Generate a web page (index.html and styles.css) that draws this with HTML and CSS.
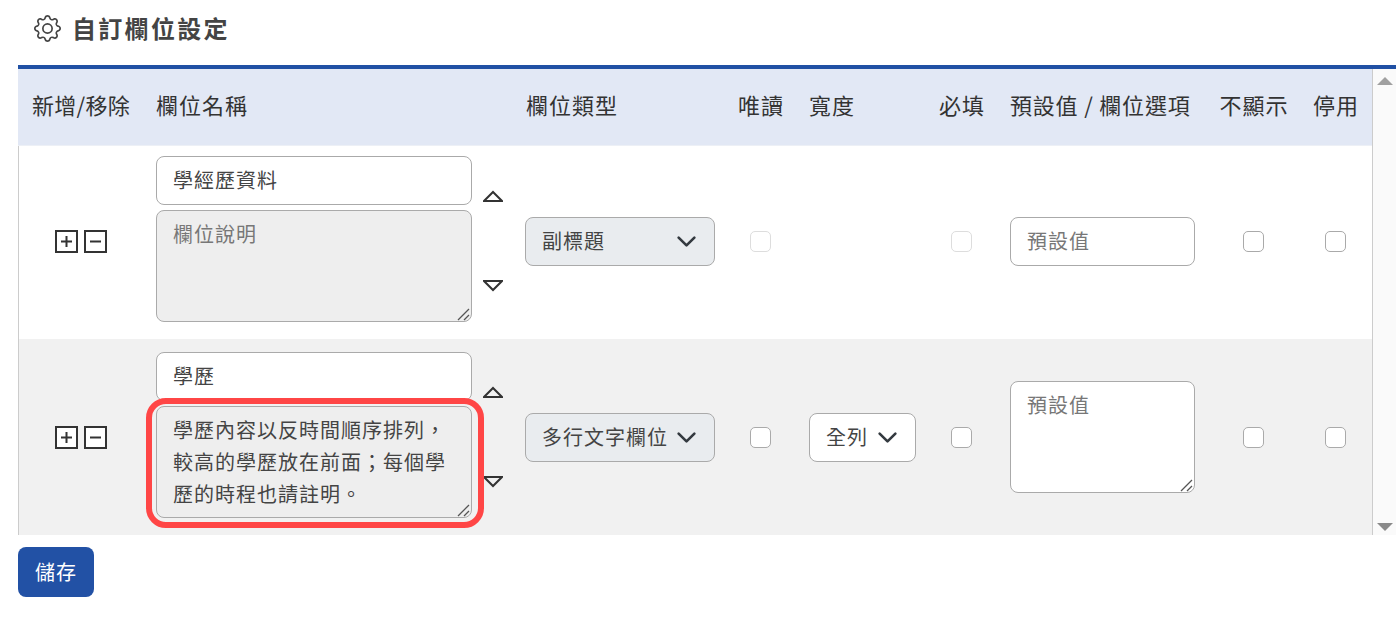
FILE: index.html
```html
<!DOCTYPE html>
<html lang="zh-Hant">
<head>
    <meta charset="UTF-8">
    <meta name="viewport" content="width=device-width, initial-scale=1.0">
    <title>自訂欄位設定</title>
    <link rel="stylesheet" href="styles.css">
</head>
<body>
    <h1 class="page-title">
        <svg class="gear" viewBox="0 0 16 16" fill="currentColor">
            <path d="M8 4.754a3.246 3.246 0 1 0 0 6.492 3.246 3.246 0 0 0 0-6.492zM5.754 8a2.246 2.246 0 1 1 4.492 0 2.246 2.246 0 0 1-4.492 0z"/>
            <path d="M9.796 1.343c-.527-1.79-3.065-1.79-3.592 0l-.094.319a.873.873 0 0 1-1.255.52l-.292-.16c-1.64-.892-3.433.902-2.54 2.541l.159.292a.873.873 0 0 1-.52 1.255l-.319.094c-1.79.527-1.79 3.065 0 3.592l.319.094a.873.873 0 0 1 .52 1.255l-.16.292c-.892 1.64.901 3.434 2.541 2.54l.292-.159a.873.873 0 0 1 1.255.52l.094.319c.527 1.79 3.065 1.79 3.592 0l.094-.319a.873.873 0 0 1 1.255-.52l.292.16c1.64.893 3.434-.902 2.54-2.541l-.159-.292a.873.873 0 0 1 .52-1.255l.319-.094c1.79-.527 1.79-3.065 0-3.592l-.319-.094a.873.873 0 0 1-.52-1.255l.16-.292c.893-1.64-.902-3.433-2.541-2.54l-.292.159a.873.873 0 0 1-1.255-.52l-.094-.319zm-2.633.283c.246-.835 1.428-.835 1.674 0l.094.319a1.873 1.873 0 0 0 2.693 1.115l.291-.16c.764-.415 1.6.42 1.184 1.185l-.159.292a1.873 1.873 0 0 0 1.116 2.692l.318.094c.835.246.835 1.428 0 1.674l-.319.094a1.873 1.873 0 0 0-1.115 2.693l.16.291c.415.764-.42 1.6-1.185 1.184l-.291-.159a1.873 1.873 0 0 0-2.693 1.116l-.094.318c-.246.835-1.428.835-1.674 0l-.094-.319a1.873 1.873 0 0 0-2.692-1.115l-.292.16c-.764.415-1.6-.42-1.184-1.185l.159-.291A1.873 1.873 0 0 0 1.945 8.93l-.319-.094c-.835-.246-.835-1.428 0-1.674l.319-.094A1.873 1.873 0 0 0 3.06 4.377l-.16-.292c-.415-.764.42-1.6 1.185-1.184l.292.159a1.873 1.873 0 0 0 2.692-1.115l.094-.319z"/>
        </svg>
        <span>自訂欄位設定</span>
    </h1>

    <div class="panel">
        <table class="field-table">
            <colgroup>
                <col class="col-add">
                <col class="col-name">
                <col class="col-type">
                <col class="col-check">
                <col class="col-width">
                <col class="col-check">
                <col class="col-default">
                <col class="col-hide">
                <col class="col-off">
            </colgroup>
            <thead>
                <tr>
                    <th class="th-add">新增/移除</th>
                    <th>欄位名稱</th>
                    <th class="th-type">欄位類型</th>
                    <th class="center">唯讀</th>
                    <th class="th-wide">寬度</th>
                    <th class="center">必填</th>
                    <th class="th-wide th-default">預設值 / 欄位選項</th>
                    <th class="center">不顯示</th>
                    <th class="center">停用</th>
                </tr>
            </thead>
            <tbody>
                <tr class="row-first">
                    <td>
                        <div class="add-remove">
                            <svg class="square-btn" viewBox="0 0 23 23"><rect x="1" y="1" width="21" height="21"/><path d="M6 11.5h11M11.5 6v11"/></svg>
                            <svg class="square-btn" viewBox="0 0 23 23"><rect x="1" y="1" width="21" height="21"/><path d="M6 11.5h11"/></svg>
                        </div>
                    </td>
                    <td class="name-cell">
                        <div class="name-wrap">
                            <div class="name-fields">
                                <input class="field" type="text" value="學經歷資料">
                                <textarea class="field note" placeholder="欄位說明" disabled></textarea>
                            </div>
                            <div class="move-arrows">
                                <svg viewBox="0 0 20 12"><path d="M1 11h18L10 2z"/></svg>
                                <svg viewBox="0 0 20 12"><path d="M1 1h18l-9 9z"/></svg>
                            </div>
                        </div>
                    </td>
                    <td><select class="field pick pick-type" disabled><option>副標題</option></select></td>
                    <td class="center"><input class="check" type="checkbox" disabled></td>
                    <td class="td-wide"></td>
                    <td class="center"><input class="check" type="checkbox" disabled></td>
                    <td class="td-wide"><input class="field default-field" type="text" placeholder="預設值"></td>
                    <td class="center"><input class="check" type="checkbox"></td>
                    <td class="center"><input class="check" type="checkbox"></td>
                </tr>
                <tr class="row-alt">
                    <td>
                        <div class="add-remove">
                            <svg class="square-btn" viewBox="0 0 23 23"><rect x="1" y="1" width="21" height="21"/><path d="M6 11.5h11M11.5 6v11"/></svg>
                            <svg class="square-btn" viewBox="0 0 23 23"><rect x="1" y="1" width="21" height="21"/><path d="M6 11.5h11"/></svg>
                        </div>
                    </td>
                    <td class="name-cell">
                        <div class="name-wrap">
                            <div class="name-fields">
                                <input class="field" type="text" value="學歷">
                                <div class="note-wrap">
                                    <textarea class="field note" disabled>學歷內容以反時間順序排列，較高的學歷放在前面；每個學歷的時程也請註明。</textarea>
                                    <div class="highlight"></div>
                                </div>
                            </div>
                            <div class="move-arrows">
                                <svg viewBox="0 0 20 12"><path d="M1 11h18L10 2z"/></svg>
                                <svg viewBox="0 0 20 12"><path d="M1 1h18l-9 9z"/></svg>
                            </div>
                        </div>
                    </td>
                    <td><select class="field pick pick-type" disabled><option>多行文字欄位</option></select></td>
                    <td class="center"><input class="check" type="checkbox"></td>
                    <td class="td-wide"><select class="field pick pick-width"><option>全列</option></select></td>
                    <td class="center"><input class="check" type="checkbox"></td>
                    <td class="td-wide"><textarea class="field default-field default-area" placeholder="預設值"></textarea></td>
                    <td class="center"><input class="check" type="checkbox"></td>
                    <td class="center"><input class="check" type="checkbox"></td>
                </tr>
            </tbody>
        </table>
        <div class="scrollbar">
            <span class="scroll-up"></span>
            <span class="scroll-down"></span>
        </div>
    </div>

    <button class="save-btn" type="button">儲存</button>
</body>
</html>
```

FILE: styles.css
```css
* {
    box-sizing: border-box;
}

body {
    margin: 0;
    padding: 0 4px 0 18px;
    background: #fff;
    color: #444;
    font-family: "Noto Sans CJK TC", "Noto Sans", sans-serif;
    font-size: 20px;
    letter-spacing: 1px;
}

.page-title {
    display: flex;
    align-items: center;
    gap: 11px;
    height: 65px;
    margin: 0;
    padding: 0 0 11px 16px;
    font-size: 24px;
    font-weight: 700;
    letter-spacing: 2.3px;
    color: #444;
}

.gear {
    width: 27px;
    height: 27px;
    margin-top: 2px;
}

.panel {
    display: flex;
    height: 470px;
    border-top: 4px solid #2050a4;
}

.field-table {
    flex: none;
    width: 1354px;
    height: 466px;
    table-layout: fixed;
    border-collapse: separate;
    border-spacing: 0;
}

.col-add { width: 126px; }
.col-name { width: 369px; }
.col-type { width: 214px; }
.col-check { width: 68px; }
.col-width { width: 133px; }
.col-default { width: 212px; }
.col-hide { width: 92px; }
.col-off { width: 72px; }

th {
    height: 77px;
    padding: 0 0 6px 12px;
    background: #e2e8f5;
    border-bottom: 1px solid #edf0f6;
    color: #333;
    font-weight: 400;
    font-size: 22px;
    letter-spacing: 1px;
    text-align: left;
    white-space: nowrap;
}

th.th-add {
    padding-left: 14px;
    letter-spacing: 0.3px;
}

th.th-type {
    padding-left: 13px;
}

th.th-wide {
    padding-left: 14px;
}

th.th-default {
    letter-spacing: 0.8px;
}

th.center {
    padding-left: 0;
    text-align: center;
}

td {
    padding: 0 0 0 12px;
    vertical-align: middle;
}

td:first-child {
    padding-left: 0;
    border-left: 1px solid #ccc;
}

td.center {
    padding: 0 2px 0 0;
    text-align: center;
}

td.td-wide {
    padding-left: 14px;
}

.row-first td {
    padding-bottom: 3px;
}

.row-alt td {
    background: #f1f1f1;
}

td.name-cell {
    padding-top: 13px;
    padding-bottom: 17px;
}

.row-first td.name-cell {
    padding-top: 10px;
}

.add-remove {
    display: flex;
    justify-content: center;
    gap: 6px;
    padding-right: 2px;
}

.square-btn {
    width: 23px;
    height: 23px;
    fill: #fff;
    stroke: #333;
    stroke-width: 2;
}

.row-first .square-btn {
    fill: none;
}

.square-btn path {
    fill: none;
}

.name-wrap {
    display: flex;
    align-items: center;
    gap: 11px;
}

.name-fields {
    display: flex;
    flex-direction: column;
    gap: 5px;
    width: 316px;
}

.move-arrows {
    display: flex;
    flex-direction: column;
    gap: 78px;
    padding-top: 4px;
}

.move-arrows svg {
    display: block;
    width: 20px;
    height: 12px;
    fill: none;
    stroke: #333;
    stroke-width: 2;
}

.field {
    display: block;
    width: 100%;
    height: 49px;
    padding: 0 16px 2px;
    background: #fff;
    border: 1px solid #aaa;
    border-radius: 8px;
    color: #444;
    font: inherit;
    letter-spacing: 1px;
    outline: none;
}

.field::placeholder {
    color: #777;
    opacity: 1;
}

textarea.field {
    height: 112px;
    padding: 7px 16px;
    line-height: 32px;
}

textarea.field::-webkit-resizer {
    background: url("data:image/svg+xml,%3csvg xmlns='http://www.w3.org/2000/svg' width='15' height='15'%3e%3cpath fill='none' stroke='%23555' stroke-width='1.3' d='M2 14L13 3M8 14l5-5'/%3e%3c/svg%3e") no-repeat;
}

.note:disabled {
    background: #eee;
    color: #444;
    -webkit-text-fill-color: #444;
    opacity: 1;
}

.note::placeholder {
    -webkit-text-fill-color: #777;
}

.note-wrap {
    position: relative;
}

.highlight {
    position: absolute;
    top: -8px;
    right: -12px;
    bottom: -10px;
    left: -10px;
    border: 6px solid #ff4646;
    border-radius: 20px;
    pointer-events: none;
}

.pick {
    appearance: none;
    padding-right: 36px;
    background-image: url("data:image/svg+xml,%3csvg xmlns='http://www.w3.org/2000/svg' viewBox='0 0 16 16'%3e%3cpath fill='none' stroke='%23343a40' stroke-linecap='round' stroke-linejoin='round' stroke-width='2' d='M2 5l6 6 6-6'/%3e%3c/svg%3e");
    background-repeat: no-repeat;
    background-position: right 17px center;
    background-size: 21px 21px;
}

.pick-type {
    width: 190px;
}

.pick-type:disabled {
    background-color: #e9ecef;
    color: #444;
    opacity: 1;
}

.pick-width {
    width: 107px;
}

.default-field {
    width: 185px;
}

.check {
    appearance: none;
    display: block;
    width: 21px;
    height: 21px;
    margin: 0 auto;
    background: #fff;
    border: 1px solid #aaa;
    border-radius: 5px;
}

.check:disabled {
    border-color: #ddd;
}

.scrollbar {
    display: flex;
    flex: 1;
    flex-direction: column;
    justify-content: space-between;
    align-items: center;
    padding: 8px 0 4px;
    background: #fafafa;
    border-left: 1px solid #ccc;
}

.scroll-up,
.scroll-down {
    width: 0;
    height: 0;
    border-left: 8px solid transparent;
    border-right: 8px solid transparent;
}

.scroll-up {
    border-bottom: 8px solid #a0a0a0;
}

.scroll-down {
    border-top: 8px solid #8a8a8a;
}

.save-btn {
    display: block;
    width: 76px;
    height: 50px;
    margin-top: 12px;
    padding: 0 0 2px;
    background: #2251a5;
    border: none;
    border-radius: 8px;
    color: #fff;
    font: inherit;
    letter-spacing: 1px;
}
```
